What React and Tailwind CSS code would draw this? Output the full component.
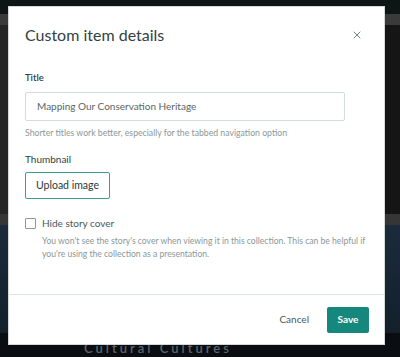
import { X } from 'lucide-react';

export default function App() {
  return (
    <div className="relative w-[400px] h-[357px] overflow-hidden bg-[#0b0f10] font-['Lato',sans-serif]">
      {/* page behind the dialog */}
      <div className="flex flex-col">
        <div className="h-[14px] bg-[#0d1614]" />
        <div className="h-[11px] bg-[#3a3a3a]" />
        <div className="h-[189px] bg-gradient-to-r from-[#252525] via-[#1c1c1c] to-[#141514]" />
        <div className="h-[11px] bg-[#363636]" />
        <div className="h-[108px] bg-gradient-to-b from-[#1b2b3b] to-[#13202c]" />
        <div className="h-[24px] bg-[#0a0e12] px-[84px] pt-[9px]">
          <p className="text-[13px] leading-none font-semibold text-[#5d646b] tracking-[3px]">Cultural Cultures</p>
        </div>
      </div>

      {/* dialog */}
      <div className="absolute left-[8px] top-[6px] w-[377px] h-[339px] bg-white border border-[#d4d8d8] flex flex-col">
        <div className="flex items-center justify-between pl-[16px] pr-[21px] pt-[15px] h-[40px]">
          <h2 className="text-[16px] leading-[24px] font-normal text-[#33413f]">Custom item details</h2>
          <X className="w-[12px] h-[12px] text-[#3c4a4a]" strokeWidth={1.4} />
        </div>

        <div className="flex-1 px-[16px] pt-[25px]">
          <label className="block text-[9.5px] leading-[12px] font-semibold text-[#2f3d3d]">Title</label>
          <div className="mt-[8px] w-[320px] h-[29px] border border-[#d3dcdc] rounded-[2px] flex items-center px-[11px]">
            <span className="text-[10px] text-[#5a6666]">Mapping Our Conservation Heritage</span>
          </div>
          <p className="mt-[6px] text-[8.7px] leading-[12px] text-[#8a9898]">
            Shorter titles work better, especially for the tabbed navigation option
          </p>

          <label className="block mt-[14px] text-[10px] leading-[12px] text-[#2f3d3d]">Thumbnail</label>
          <button className="mt-[7px] w-[85px] h-[27px] border border-[#3e9c95] rounded-[2px] text-[10.5px] text-[#2a3838] flex items-center justify-center">
            Upload image
          </button>

          <div className="mt-[18px] flex items-center gap-[6px]">
            <span className="w-[11px] h-[11px] border border-[#8a9898] rounded-[1px]" />
            <span className="text-[10px] leading-[12px] text-[#4a5757]">Hide story cover</span>
          </div>
          <p className="mt-[6px] ml-[17px] text-[8.6px] leading-[12.5px] text-[#8a9898]">
            You won't see the story's cover when viewing it in this collection. This can be helpful if you're using the collection as a presentation.
          </p>
        </div>

        <div className="h-[50px] border-t border-[#dfe4e4] flex items-center justify-end gap-[18px] pr-[15px]">
          <button className="text-[10px] text-[#4a5757]">Cancel</button>
          <button className="w-[42px] h-[26px] bg-[#16877c] rounded-[2px] text-[10px] font-bold text-white">Save</button>
        </div>
      </div>
    </div>
  );
}
